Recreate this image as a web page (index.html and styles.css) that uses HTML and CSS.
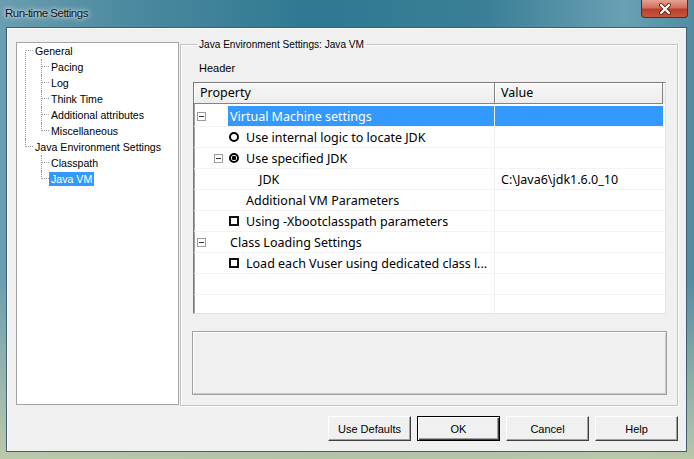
FILE: index.html
```html
<!DOCTYPE html>
<html lang="en">
<head>
  <meta charset="UTF-8">
  <title>Run-time Settings</title>
  <link rel="stylesheet" href="styles.css">
</head>
<body>
  <div class="window">

    <!-- Title bar -->
    <div class="titlebar">
      <span class="title">Run-time Settings</span>
      <button class="close" title="Close">
        <svg width="45" height="16" viewBox="0 0 45 16">
          <path d="M19 4 L27 12 M27 4 L19 12" stroke="#6b2319" stroke-width="4" stroke-linecap="round"/>
          <path d="M19 4 L27 12 M27 4 L19 12" stroke="#fff" stroke-width="2.2" stroke-linecap="round"/>
        </svg>
      </button>
    </div>

    <div class="client">
      <div class="main">

        <!-- Settings tree -->
        <div class="tree">
          <ul class="tree-list">
            <li class="node first">
              <div class="item"><span class="stub"></span><span class="label">General</span></div>
              <ul class="kids">
                <li class="node"><div class="item"><span class="stub"></span><span class="label">Pacing</span></div></li>
                <li class="node"><div class="item"><span class="stub"></span><span class="label">Log</span></div></li>
                <li class="node"><div class="item"><span class="stub"></span><span class="label">Think Time</span></div></li>
                <li class="node"><div class="item"><span class="stub"></span><span class="label">Additional attributes</span></div></li>
                <li class="node last"><div class="item"><span class="stub"></span><span class="label">Miscellaneous</span></div></li>
              </ul>
            </li>
            <li class="node last">
              <div class="item"><span class="stub"></span><span class="label">Java Environment Settings</span></div>
              <ul class="kids">
                <li class="node"><div class="item"><span class="stub"></span><span class="label">Classpath</span></div></li>
                <li class="node last"><div class="item"><span class="stub"></span><span class="label selected">Java VM</span></div></li>
              </ul>
            </li>
          </ul>
        </div>

        <!-- Settings page -->
        <fieldset class="group">
          <legend>Java Environment Settings: Java VM</legend>
          <div class="header-label">Header</div>

          <div class="grid">
            <div class="grid-head">
              <div class="head-cell prop-col">Property</div>
              <div class="head-cell val-col">Value</div>
            </div>
            <div class="grid-rows">
              <div class="row sel">
                <div class="prop"><span class="exp"><span class="minus"></span></span><span class="name lvl0">Virtual Machine settings</span></div>
                <div class="val"></div>
              </div>
              <div class="row">
                <div class="prop"><span class="exp"></span><span class="name lvl1"><span class="radio"></span>Use internal logic to locate JDK</span></div>
                <div class="val"></div>
              </div>
              <div class="row">
                <div class="prop"><span class="exp"><span class="minus sub"></span></span><span class="name lvl1"><span class="radio on"></span>Use specified JDK</span></div>
                <div class="val"></div>
              </div>
              <div class="row">
                <div class="prop"><span class="exp"></span><span class="name lvl2">JDK</span></div>
                <div class="val">C:\Java6\jdk1.6.0_10</div>
              </div>
              <div class="row">
                <div class="prop"><span class="exp"></span><span class="name lvl1 plain">Additional VM Parameters</span></div>
                <div class="val"></div>
              </div>
              <div class="row">
                <div class="prop"><span class="exp"></span><span class="name lvl1"><span class="check"></span>Using -Xbootclasspath parameters</span></div>
                <div class="val"></div>
              </div>
              <div class="row">
                <div class="prop"><span class="exp"><span class="minus"></span></span><span class="name lvl0">Class Loading Settings</span></div>
                <div class="val"></div>
              </div>
              <div class="row">
                <div class="prop"><span class="exp"></span><span class="name lvl1"><span class="check"></span>Load each Vuser using dedicated class l...</span></div>
                <div class="val"></div>
              </div>
              <div class="row">
                <div class="prop"><span class="exp"></span><span class="name"></span></div>
                <div class="val"></div>
              </div>
              <div class="row">
                <div class="prop"><span class="exp"></span><span class="name"></span></div>
                <div class="val"></div>
              </div>
            </div>
          </div>

          <div class="desc"></div>
        </fieldset>
      </div>

      <!-- Dialog buttons -->
      <div class="buttons">
        <button class="btn">Use Defaults</button>
        <button class="btn default">OK</button>
        <button class="btn">Cancel</button>
        <button class="btn">Help</button>
      </div>
    </div>
  </div>
</body>
</html>
```

FILE: styles.css
```css
/* Reset */
* {
  margin: 0;
  padding: 0;
  box-sizing: border-box;
}

body {
  width: 694px;
  height: 459px;
  overflow: hidden;
  font-family: "Liberation Sans", Arial, sans-serif;
  font-size: 10.6px;
  color: #000;
}

ul {
  list-style: none;
}

/* Window frame */
.window {
  width: 694px;
  height: 459px;
  display: flex;
  flex-direction: column;
  background:
    linear-gradient(180deg, rgba(255,255,255,0) 60%, rgba(196, 205, 170, 0.9) 100%),
    linear-gradient(90deg, #6b9db0 0%, #4c8aa0 18%, #2f7892 45%, #3a7f97 70%, #6aa0b3 90%, #4f8ca2 100%);
}

.titlebar {
  height: 27px;
  display: flex;
  align-items: flex-start;
  flex: none;
}

.title {
  font-family: "Liberation Sans", Arial, sans-serif;
  font-size: 11.5px;
  letter-spacing: -0.5px;
  line-height: 27px;
  margin-left: 5px;
  color: #111;
  text-shadow: 0 0 6px rgba(255, 255, 255, 0.9), 0 0 3px rgba(255, 255, 255, 0.8);
}

.close {
  margin-left: auto;
  margin-right: 6px;
  width: 47px;
  height: 18px;
  border: 1px solid #5b2a22;
  border-top: none;
  border-radius: 0 0 4px 4px;
  background: linear-gradient(180deg, #e7a191 0%, #d0715e 45%, #b8402b 55%, #c9563f 100%);
  display: flex;
  align-items: center;
  justify-content: center;
}

/* Client area */
.client {
  flex: 1;
  margin: 0 7px 7px 6px;
  background: #f0f0f0;
  border: 1px solid #3f5f6c;
  box-shadow: inset 1px 1px 0 #fff;
  display: flex;
  flex-direction: column;
}

.main {
  display: flex;
  padding: 10px 0 0 9px;
}

/* Tree */
.tree {
  width: 163px;
  height: 363px;
  margin-top: 4px;
  background: #fff;
  border: 1px solid #a5a5a5;
  padding-left: 8px;
}

.tree-list .node {
  border-left: 1px dotted #9a9a9a;
}

.tree-list .node.last {
  border-left: 1px solid transparent;
}

.item {
  display: flex;
  align-items: flex-start;
  height: 16px;
}

.stub {
  flex: none;
  width: 7px;
  height: 8px;
  border-bottom: 1px dotted #9a9a9a;
}

.node.last > .item > .stub {
  margin-left: -1px;
  width: 8px;
  border-left: 1px dotted #9a9a9a;
}

.node.first > .item > .stub {
  margin-left: -1px;
  width: 8px;
  border-left: 1px solid #fff;
}

.label {
  padding: 0 2px;
  line-height: 14px;
  margin-top: 1px;
  white-space: nowrap;
}

.label.selected {
  background: #3399ff;
  color: #fff;
}

.kids {
  margin-left: 15px;
}

/* Group box */
.group {
  width: 498px;
  height: 368px;
  margin-left: 1px;
  border: 1px solid #c3c3c3;
  box-shadow: inset 1px 1px 0 #fff, 1px 1px 0 #fff;
  padding: 11px 0 0 12px;
}

.group legend {
  margin-left: 4px;
  padding: 0 2px;
  font-size: 10.1px;
  line-height: 13px;
}

.header-label {
  margin-left: 6px;
  font-size: 11px;
  line-height: 13px;
}

/* Property grid */
.grid {
  width: 473px;
  height: 232px;
  margin-top: 7px;
  background: #fff;
  border: 1px solid;
  border-color: #7a7a7a #e2e2e2 #e2e2e2 #7a7a7a;
  box-shadow: inset 1px 0 0 #a0a0a0;
  overflow: hidden;
  font-family: "Noto Sans", sans-serif;
  font-size: 12.5px;
}

.grid-head {
  display: flex;
  height: 21px;
  background: linear-gradient(180deg, #f7f7f7, #ececec);
}

.head-cell {
  line-height: 20px;
  padding-left: 6px;
  border-right: 1px solid #838383;
  border-bottom: 1px solid #838383;
  box-shadow: inset 1px 1px 0 #fff;
}

.prop-col { width: 301px; }
.val-col { width: 168px; }

.grid-rows {
  padding-top: 2px;
}

.row {
  display: flex;
  height: 21px;
  border-bottom: 1px solid #f3f3f3;
}

.prop {
  width: 301px;
  display: flex;
  border-right: 1px solid #f1f1f1;
}

.exp {
  width: 34px;
  flex: none;
  display: flex;
  align-items: center;
}

.minus {
  width: 9px;
  height: 9px;
  margin-left: 3px;
  border: 1px solid #9c9c9c;
  background: linear-gradient(#333, #333) center / 5px 1px no-repeat, #fff;
}

.minus.sub {
  margin-left: 20px;
}

.name {
  flex: 1;
  display: flex;
  align-items: center;
  white-space: nowrap;
}

.name.lvl0 { padding-left: 2px; }
.name.lvl1 { padding-left: 1px; }
.name.lvl1.plain { padding-left: 18px; }
.name.lvl2 { padding-left: 31px; }

.val {
  width: 168px;
  display: flex;
  align-items: center;
  padding-left: 6px;
  white-space: nowrap;
}

.row.sel .name,
.row.sel .val {
  background: #3399ff;
  color: #fff;
}

.radio {
  width: 10px;
  height: 10px;
  margin-right: 7px;
  border: 2px solid #000;
  border-radius: 50%;
  flex: none;
}

.radio.on {
  background: radial-gradient(circle, #000 0 2px, transparent 2.5px);
}

.check {
  width: 10px;
  height: 10px;
  margin-right: 7px;
  border: 2px solid #111;
  flex: none;
}

/* Description box */
.desc {
  width: 475px;
  height: 64px;
  margin: 17px 0 0 -1px;
  border: 1px solid #a0a0a0;
  box-shadow: inset 1px 1px 0 #fff, inset -1px -1px 0 #c8c8c8;
}

/* Buttons */
.buttons {
  display: flex;
  justify-content: flex-end;
  gap: 6px;
  margin-top: 10px;
  padding-right: 8px;
}

.btn {
  width: 83px;
  height: 25px;
  font-family: "Liberation Sans", Arial, sans-serif;
  font-size: 11px;
  color: #000;
  background: #f0f0f0;
  border: 1px solid;
  border-color: #fff #404040 #404040 #fff;
  box-shadow: inset -1px -1px 0 #a0a0a0;
}

.btn.default {
  border: 1px solid #000;
  box-shadow: inset 1px 1px 0 #fff, inset -1px -1px 0 #404040, inset -2px -2px 0 #a0a0a0;
}
```
